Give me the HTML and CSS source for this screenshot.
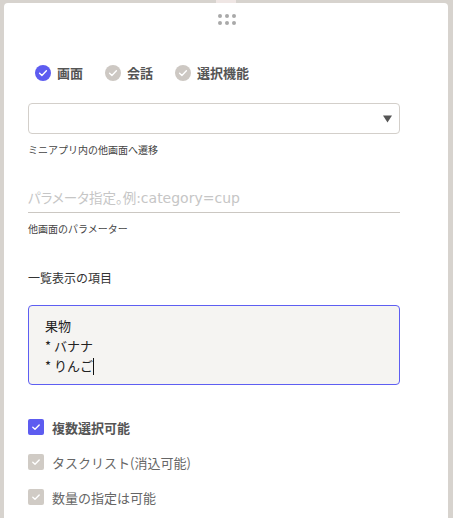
FILE: index.html
```html
<!DOCTYPE html>
<html lang="ja">

<head>
    <meta charset="UTF-8">
    <meta name="viewport" content="width=device-width, initial-scale=1.0">
    <title>リスト設定</title>
    <link rel="stylesheet" href="styles.css">
</head>

<body>
    <div class="tab-edge"></div>

    <!-- Settings panel -->
    <div class="panel">
        <div class="handle">
            <span></span><span></span><span></span>
            <span></span><span></span><span></span>
        </div>

        <!-- Action type -->
        <div class="type-row">
            <div class="type-option active"><span class="dot"><svg viewBox="0 0 16 16"><path d="M4.6 8.2l2.3 2.2 4.5-4.6" /></svg></span>画面</div>
            <div class="type-option"><span class="dot"><svg viewBox="0 0 16 16"><path d="M4.6 8.2l2.3 2.2 4.5-4.6" /></svg></span>会話</div>
            <div class="type-option"><span class="dot"><svg viewBox="0 0 16 16"><path d="M4.6 8.2l2.3 2.2 4.5-4.6" /></svg></span>選択機能</div>
        </div>

        <div class="select-box">
            <svg class="caret" viewBox="0 0 10 8"><polygon points="0,0 10,0 5,8" /></svg>
        </div>
        <div class="hint">ミニアプリ内の他画面へ遷移</div>

        <div class="param-input">パラメータ指定。例<span class="latin">:category=cup</span></div>
        <div class="hint">他画面のパラメーター</div>

        <div class="field-label">一覧表示の項目</div>
        <div class="item-area">
            <div>果物</div>
            <div>* バナナ</div>
            <div>* りんご<span class="cursor"></span></div>
        </div>

        <!-- Options -->
        <div class="check-list">
            <div class="check-row on"><span class="box"><svg viewBox="0 0 16 16"><path d="M4.8 8.3l2.2 2 4.2-4.3" /></svg></span>複数選択可能</div>
            <div class="check-row"><span class="box"><svg viewBox="0 0 16 16"><path d="M4.8 8.3l2.2 2 4.2-4.3" /></svg></span>タスクリスト(消込可能)</div>
            <div class="check-row"><span class="box"><svg viewBox="0 0 16 16"><path d="M4.8 8.3l2.2 2 4.2-4.3" /></svg></span>数量の指定は可能</div>
        </div>
    </div>
</body>

</html>
```

FILE: styles.css
```css
body {
    font-family: "Noto Sans CJK JP", "Noto Sans", sans-serif;
    margin: 0;
    padding: 0;
    background-color: #d7d3ce;
    height: 518px;
    overflow: hidden;
}

.tab-edge {
    width: 20px;
    height: 3px;
    margin-left: 216px;
    background-color: #efe6e4;
}

.panel {
    background-color: #fff;
    margin: 0 5px 0 4px;
    padding: 11px 48px 0 24px;
    height: 515px;
    box-sizing: border-box;
    border-radius: 4px 4px 0 0;
}

.handle {
    width: 18px;
    margin-left: 190px;
    display: grid;
    grid-template-columns: repeat(3, 4px);
    gap: 3px;
}

.handle span {
    width: 4px;
    height: 4px;
    border-radius: 50%;
    background-color: #a9a9a9;
}

.type-row {
    display: flex;
    gap: 22px;
    margin-top: 40px;
    margin-left: 7px;
    height: 16px;
}

.type-option {
    display: flex;
    align-items: center;
    gap: 6px;
    font-size: 13px;
    font-weight: bold;
    color: #555;
    line-height: 16px;
}

.type-option .dot {
    width: 16px;
    height: 16px;
    border-radius: 50%;
    background-color: #cdc8c3;
}

.type-option.active .dot {
    background-color: #5d5cf0;
}

.dot svg, .box svg {
    display: block;
    width: 16px;
    height: 16px;
    fill: none;
    stroke: #fff;
    stroke-width: 1.4;
    stroke-linecap: round;
    stroke-linejoin: round;
}

.select-box {
    margin-top: 22px;
    height: 29px;
    border: 1px solid #d3cfca;
    border-radius: 4px;
    display: flex;
    align-items: center;
    justify-content: flex-end;
    padding-right: 7px;
}

.caret {
    width: 9px;
    height: 8px;
    fill: #555;
}

.hint {
    font-size: 10px;
    line-height: 14px;
    color: #444;
    margin-top: 9px;
}

.param-input {
    margin-top: 25px;
    height: 31px;
    box-sizing: border-box;
    border-bottom: 1px solid #cbc7c2;
    font-size: 13.5px;
    line-height: 30px;
    color: #c6c6c6;
    font-feature-settings: "palt";
}

.param-input .latin {
    font-family: "DejaVu Sans", sans-serif;
    font-size: 14px;
}

.field-label {
    margin-top: 34px;
    font-size: 12px;
    line-height: 16px;
    color: #333;
}

.item-area {
    margin-top: 19px;
    height: 68px;
    border: 1px solid #5e5ef2;
    border-radius: 4px;
    background-color: #f5f4f2;
    padding: 10px 16px 0;
    overflow: hidden;
    font-size: 13px;
    line-height: 20px;
    color: #222;
}

.cursor {
    display: inline-block;
    width: 1px;
    height: 17px;
    background-color: #111;
    vertical-align: -4px;
}

.check-list {
    margin-top: 34px;
    display: flex;
    flex-direction: column;
    gap: 19px;
}

.check-row {
    display: flex;
    align-items: center;
    gap: 8px;
    height: 16px;
    font-size: 13px;
    color: #666;
}

.check-row .box {
    width: 16px;
    height: 16px;
    border-radius: 2px;
    background-color: #d0cbc5;
}

.check-row.on {
    font-weight: bold;
    color: #555;
}

.check-row.on .box {
    background-color: #5d5cf0;
}
```
